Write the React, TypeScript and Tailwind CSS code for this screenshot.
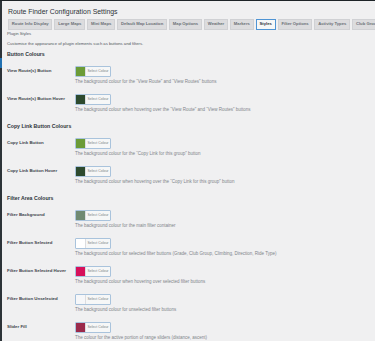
import React from 'react';

type Row = { label: string; colour: string; desc: string };
type Section = { title: string; rows: Row[] };

const tabs = [
  'Route Info Display',
  'Large Maps',
  'Mini Maps',
  'Default Map Location',
  'Map Options',
  'Weather',
  'Markers',
  'Styles',
  'Filter Options',
  'Activity Types',
  'Club Groups',
];

const sections: Section[] = [
  {
    title: 'Button Colours',
    rows: [
      { label: 'View Route(s) Button', colour: '#6b9b37', desc: 'The background colour for the “View Route” and “View Routes” buttons' },
      { label: 'View Route(s) Button Hover', colour: '#2d4a2e', desc: 'The background colour when hovering over the “View Route” and “View Routes” buttons' },
    ],
  },
  {
    title: 'Copy Link Button Colours',
    rows: [
      { label: 'Copy Link Button', colour: '#6b9b37', desc: 'The background colour for the “Copy Link for this group” button' },
      { label: 'Copy Link Button Hover', colour: '#2d4a2e', desc: 'The background colour when hovering over the “Copy Link for this group” button' },
    ],
  },
  {
    title: 'Filter Area Colours',
    rows: [
      { label: 'Filter Background', colour: '#708a72', desc: 'The background colour for the main filter container' },
      { label: 'Filter Button Selected', colour: '#ffffff', desc: 'The background colour for selected filter buttons (Grade, Club Group, Climbing, Direction, Ride Type)' },
      { label: 'Filter Button Selected Hover', colour: '#d6105a', desc: 'The background colour when hovering over selected filter buttons' },
      { label: 'Filter Button Unselected', colour: '#f6f7f9', desc: 'The background colour for unselected filter buttons' },
      { label: 'Slider Fill', colour: '#9b2a4b', desc: 'The colour for the active portion of range sliders (distance, ascent)' },
    ],
  },
];

function ColourPicker({ colour }: { colour: string }) {
  return (
    <div className="flex h-[11px] w-[36px] overflow-hidden rounded-[1px] border border-[#a9c3dc] bg-[#f6f7f7]">
      <div className="w-[9px] shrink-0" style={{ backgroundColor: colour }} />
      <div className="flex flex-1 items-center justify-center border-l border-[#dcdde0] text-[3.5px] leading-[9px] text-[#7a7f85]">
        Select Colour
      </div>
    </div>
  );
}

function SettingRow({ row }: { row: Row }) {
  return (
    <div className="flex pb-[9px]">
      <div className="w-[68px] shrink-0 text-[4.4px] font-semibold leading-[9px] text-[#3c434a]">{row.label}</div>
      <div className="min-w-0">
        <ColourPicker colour={row.colour} />
        <p className="mt-[2px] whitespace-nowrap text-[4.5px] leading-[6px] text-[#80858a]">{row.desc}</p>
      </div>
    </div>
  );
}

export default function App() {
  return (
    <div className="flex h-[341px] w-[375px] flex-col overflow-hidden bg-[#f0f0f1] font-['Liberation_Sans',Arial,sans-serif] [font-variant-ligatures:none]">
      {/* admin bar edge */}
      <div className="h-[1px] shrink-0 bg-[#1d2327]" />

      <div className="flex min-h-0 flex-1">
        {/* admin menu edge */}
        <div className="w-[2px] shrink-0 bg-[#2c3338]">
          <div className="mt-[57px] h-[10px] bg-[#2271b1]" />
        </div>

        <div className="min-w-0 flex-1 pl-[5px]">
          <h1 className="mt-[6px] pl-[1px] text-[6.9px] leading-[9px] text-[#2c3338]">Route Finder Configuration Settings</h1>

          {/* tabs */}
          <div className="mt-[3px] flex gap-[2px] overflow-hidden pl-[1px]">
            {tabs.map((t) => (
              <div
                key={t}
                className={
                  t === 'Styles'
                    ? 'flex h-[11px] shrink-0 items-center whitespace-nowrap border border-[#4f94d4] bg-[#f6f7f7] px-[2.8px] text-[4.2px] font-semibold text-[#2c3338]'
                    : 'flex h-[11px] shrink-0 items-center whitespace-nowrap border border-[#d0d1d4] bg-[#dcdcde] px-[2.8px] text-[4.2px] font-semibold text-[#6b7076]'
                }
              >
                {t}
              </div>
            ))}
          </div>

          <p className="mt-[1px] text-[4.2px] leading-[5px] text-[#50575e]">Plugin Styles</p>
          <p className="mt-[5px] text-[4.2px] leading-[5px] text-[#50575e]">
            Customise the appearance of plugin elements such as buttons and filters.
          </p>

          <div className="mt-[4px]">
            {sections.map((s) => (
              <div key={s.title}>
                <h2 className="mb-[8px] text-[5.2px] font-semibold leading-[8px] text-[#2c3338]">{s.title}</h2>
                {s.rows.map((r) => (
                  <SettingRow key={r.label} row={r} />
                ))}
              </div>
            ))}
          </div>
        </div>
      </div>
    </div>
  );
}
